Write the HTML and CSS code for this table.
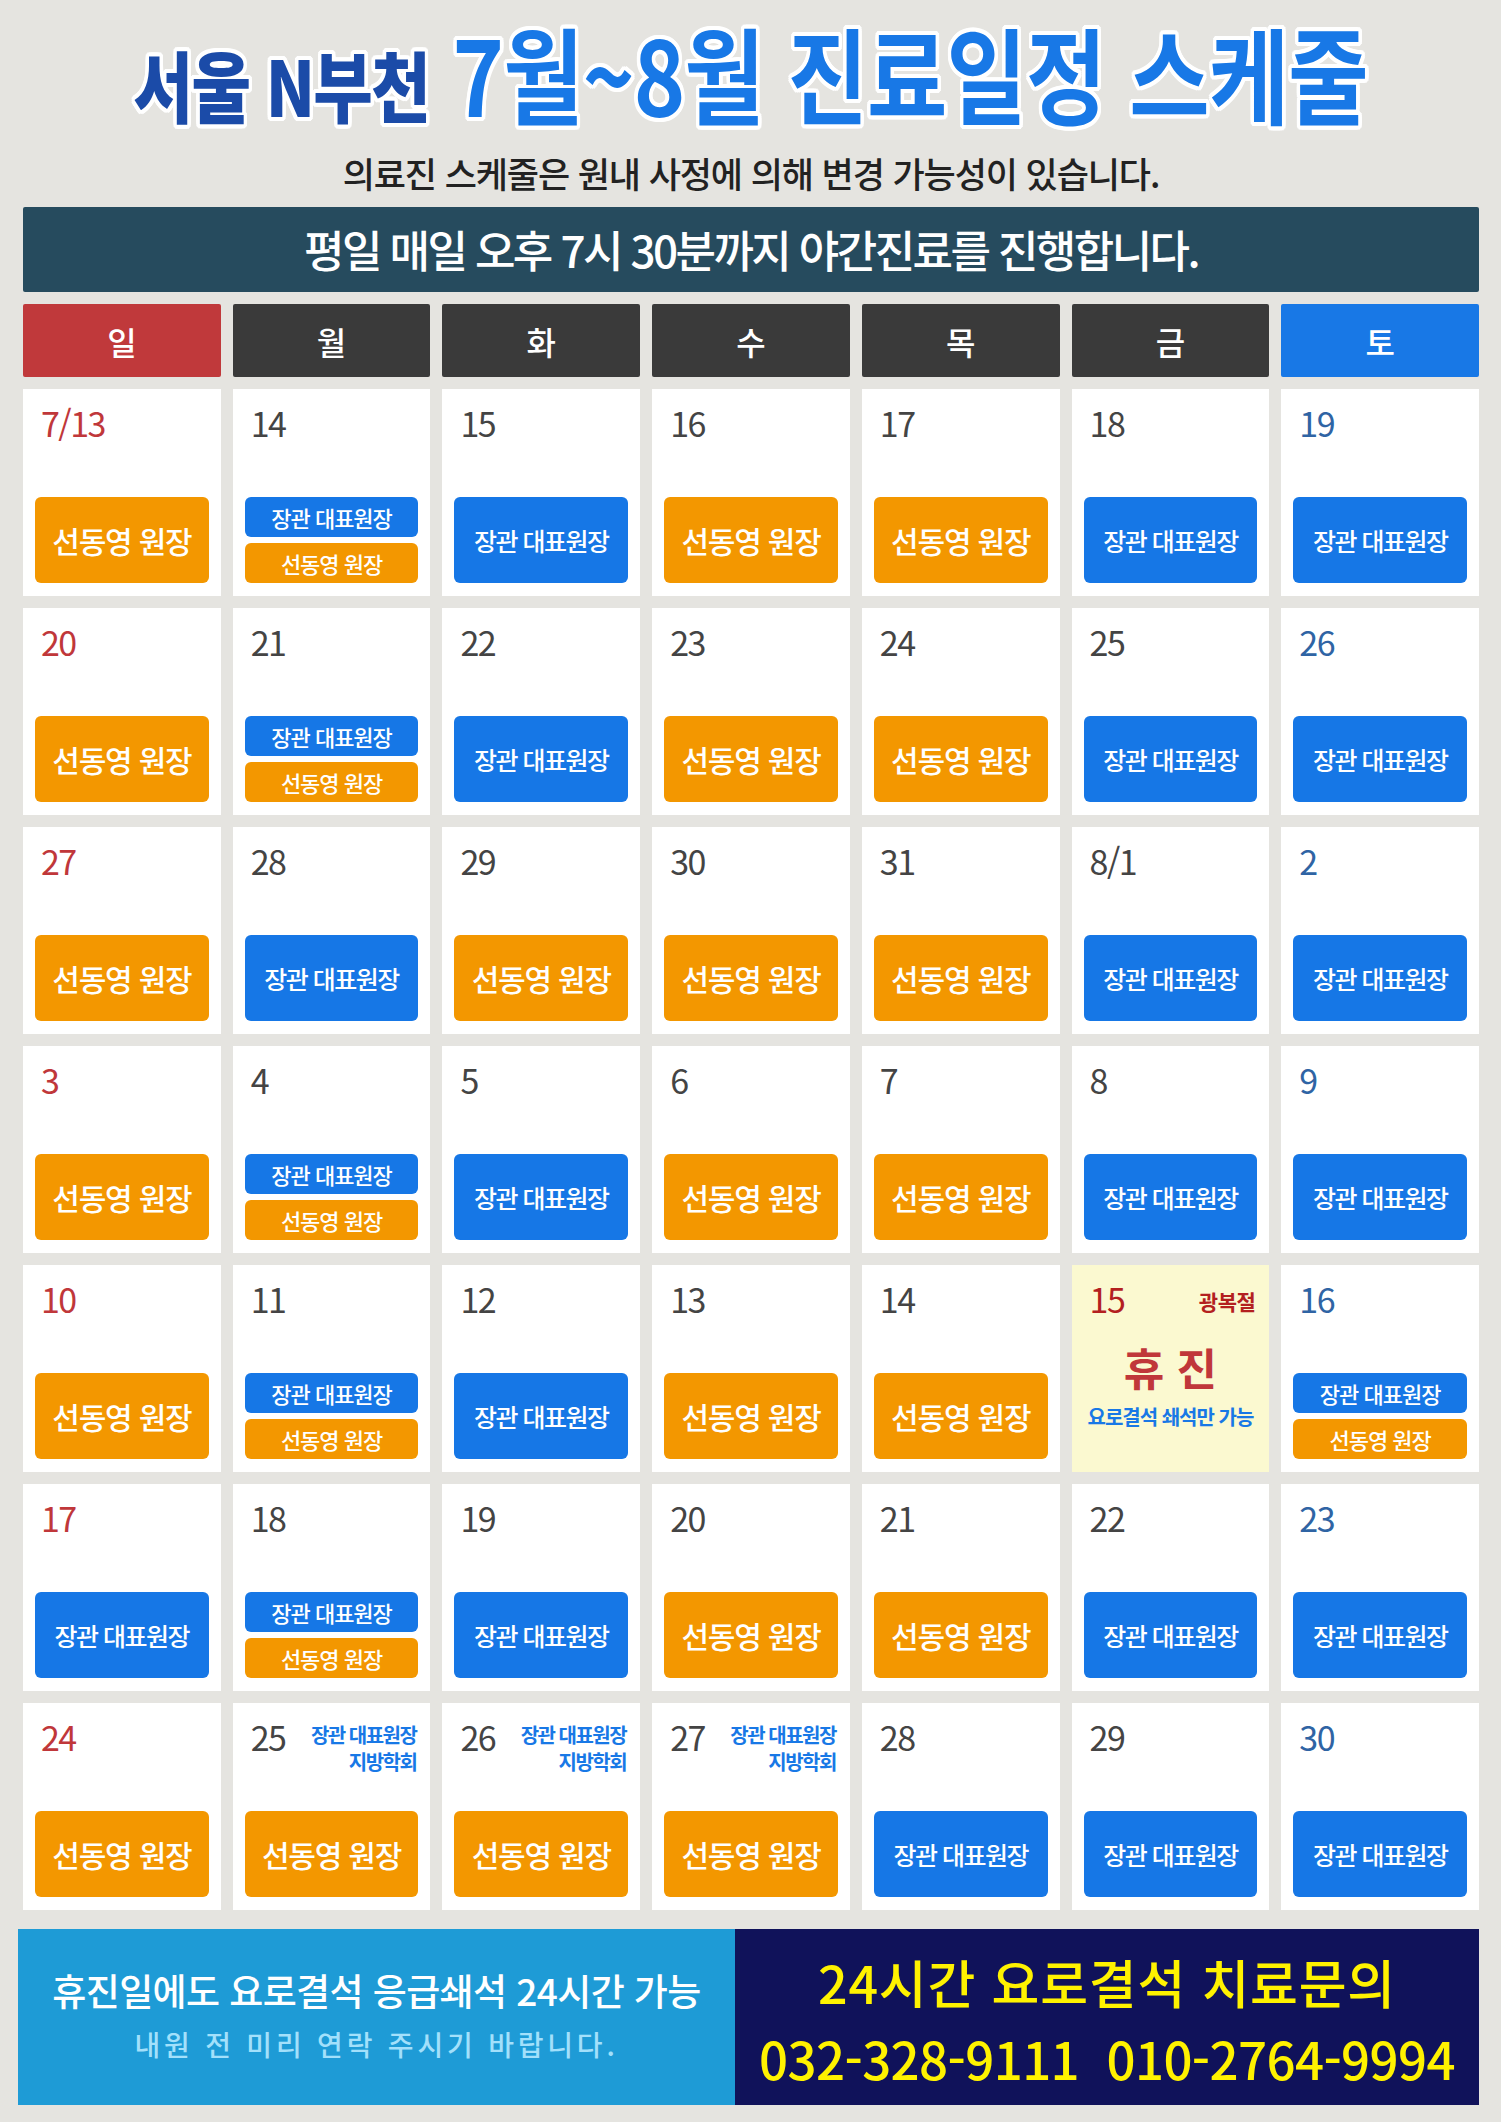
FILE: index.html
```html
<!DOCTYPE html>
<html lang="ko">
<head>
<meta charset="utf-8">
<title>서울 N부천 7월~8월 진료일정 스케줄</title>
<link rel="stylesheet" href="styles.css">
</head>
<body>
<div class="page">
  <h1 class="title"><span class="title-inner"><span class="t1">서울 N부천</span><span class="t2">7월~8월 진료일정 스케줄</span></span></h1>
  <p class="sub">의료진 스케줄은 원내 사정에 의해 변경 가능성이 있습니다.</p>
  <div class="notice">평일 매일 오후 7시 30분까지 야간진료를 진행합니다.</div>

  <div class="cal">
    <div class="dh sun">일</div>
    <div class="dh">월</div>
    <div class="dh">화</div>
    <div class="dh">수</div>
    <div class="dh">목</div>
    <div class="dh">금</div>
    <div class="dh sat">토</div>

    <!-- row 1 -->
    <div class="cell"><div class="top"><span class="num sun">7/13</span></div><div class="slot"><span class="badge lg o">선동영 원장</span></div></div>
    <div class="cell"><div class="top"><span class="num">14</span></div><div class="slot"><span class="badge sm b">장관 대표원장</span><span class="badge sm o">선동영 원장</span></div></div>
    <div class="cell"><div class="top"><span class="num">15</span></div><div class="slot"><span class="badge lg b">장관 대표원장</span></div></div>
    <div class="cell"><div class="top"><span class="num">16</span></div><div class="slot"><span class="badge lg o">선동영 원장</span></div></div>
    <div class="cell"><div class="top"><span class="num">17</span></div><div class="slot"><span class="badge lg o">선동영 원장</span></div></div>
    <div class="cell"><div class="top"><span class="num">18</span></div><div class="slot"><span class="badge lg b">장관 대표원장</span></div></div>
    <div class="cell"><div class="top"><span class="num sat">19</span></div><div class="slot"><span class="badge lg b">장관 대표원장</span></div></div>

    <!-- row 2 -->
    <div class="cell"><div class="top"><span class="num sun">20</span></div><div class="slot"><span class="badge lg o">선동영 원장</span></div></div>
    <div class="cell"><div class="top"><span class="num">21</span></div><div class="slot"><span class="badge sm b">장관 대표원장</span><span class="badge sm o">선동영 원장</span></div></div>
    <div class="cell"><div class="top"><span class="num">22</span></div><div class="slot"><span class="badge lg b">장관 대표원장</span></div></div>
    <div class="cell"><div class="top"><span class="num">23</span></div><div class="slot"><span class="badge lg o">선동영 원장</span></div></div>
    <div class="cell"><div class="top"><span class="num">24</span></div><div class="slot"><span class="badge lg o">선동영 원장</span></div></div>
    <div class="cell"><div class="top"><span class="num">25</span></div><div class="slot"><span class="badge lg b">장관 대표원장</span></div></div>
    <div class="cell"><div class="top"><span class="num sat">26</span></div><div class="slot"><span class="badge lg b">장관 대표원장</span></div></div>

    <!-- row 3 -->
    <div class="cell"><div class="top"><span class="num sun">27</span></div><div class="slot"><span class="badge lg o">선동영 원장</span></div></div>
    <div class="cell"><div class="top"><span class="num">28</span></div><div class="slot"><span class="badge lg b">장관 대표원장</span></div></div>
    <div class="cell"><div class="top"><span class="num">29</span></div><div class="slot"><span class="badge lg o">선동영 원장</span></div></div>
    <div class="cell"><div class="top"><span class="num">30</span></div><div class="slot"><span class="badge lg o">선동영 원장</span></div></div>
    <div class="cell"><div class="top"><span class="num">31</span></div><div class="slot"><span class="badge lg o">선동영 원장</span></div></div>
    <div class="cell"><div class="top"><span class="num">8/1</span></div><div class="slot"><span class="badge lg b">장관 대표원장</span></div></div>
    <div class="cell"><div class="top"><span class="num sat">2</span></div><div class="slot"><span class="badge lg b">장관 대표원장</span></div></div>

    <!-- row 4 -->
    <div class="cell"><div class="top"><span class="num sun">3</span></div><div class="slot"><span class="badge lg o">선동영 원장</span></div></div>
    <div class="cell"><div class="top"><span class="num">4</span></div><div class="slot"><span class="badge sm b">장관 대표원장</span><span class="badge sm o">선동영 원장</span></div></div>
    <div class="cell"><div class="top"><span class="num">5</span></div><div class="slot"><span class="badge lg b">장관 대표원장</span></div></div>
    <div class="cell"><div class="top"><span class="num">6</span></div><div class="slot"><span class="badge lg o">선동영 원장</span></div></div>
    <div class="cell"><div class="top"><span class="num">7</span></div><div class="slot"><span class="badge lg o">선동영 원장</span></div></div>
    <div class="cell"><div class="top"><span class="num">8</span></div><div class="slot"><span class="badge lg b">장관 대표원장</span></div></div>
    <div class="cell"><div class="top"><span class="num sat">9</span></div><div class="slot"><span class="badge lg b">장관 대표원장</span></div></div>

    <!-- row 5 -->
    <div class="cell"><div class="top"><span class="num sun">10</span></div><div class="slot"><span class="badge lg o">선동영 원장</span></div></div>
    <div class="cell"><div class="top"><span class="num">11</span></div><div class="slot"><span class="badge sm b">장관 대표원장</span><span class="badge sm o">선동영 원장</span></div></div>
    <div class="cell"><div class="top"><span class="num">12</span></div><div class="slot"><span class="badge lg b">장관 대표원장</span></div></div>
    <div class="cell"><div class="top"><span class="num">13</span></div><div class="slot"><span class="badge lg o">선동영 원장</span></div></div>
    <div class="cell"><div class="top"><span class="num">14</span></div><div class="slot"><span class="badge lg o">선동영 원장</span></div></div>
    <div class="cell holiday"><div class="top"><span class="num hol">15</span><span class="hol-name">광복절</span></div><div class="closed">휴 진</div><div class="closed-note">요로결석 쇄석만 가능</div></div>
    <div class="cell"><div class="top"><span class="num sat">16</span></div><div class="slot"><span class="badge sm b">장관 대표원장</span><span class="badge sm o">선동영 원장</span></div></div>

    <!-- row 6 -->
    <div class="cell"><div class="top"><span class="num sun">17</span></div><div class="slot"><span class="badge lg b">장관 대표원장</span></div></div>
    <div class="cell"><div class="top"><span class="num">18</span></div><div class="slot"><span class="badge sm b">장관 대표원장</span><span class="badge sm o">선동영 원장</span></div></div>
    <div class="cell"><div class="top"><span class="num">19</span></div><div class="slot"><span class="badge lg b">장관 대표원장</span></div></div>
    <div class="cell"><div class="top"><span class="num">20</span></div><div class="slot"><span class="badge lg o">선동영 원장</span></div></div>
    <div class="cell"><div class="top"><span class="num">21</span></div><div class="slot"><span class="badge lg o">선동영 원장</span></div></div>
    <div class="cell"><div class="top"><span class="num">22</span></div><div class="slot"><span class="badge lg b">장관 대표원장</span></div></div>
    <div class="cell"><div class="top"><span class="num sat">23</span></div><div class="slot"><span class="badge lg b">장관 대표원장</span></div></div>

    <!-- row 7 -->
    <div class="cell"><div class="top"><span class="num sun">24</span></div><div class="slot"><span class="badge lg o">선동영 원장</span></div></div>
    <div class="cell"><div class="top"><span class="num">25</span><span class="note">장관 대표원장<br>지방학회</span></div><div class="slot"><span class="badge lg o">선동영 원장</span></div></div>
    <div class="cell"><div class="top"><span class="num">26</span><span class="note">장관 대표원장<br>지방학회</span></div><div class="slot"><span class="badge lg o">선동영 원장</span></div></div>
    <div class="cell"><div class="top"><span class="num">27</span><span class="note">장관 대표원장<br>지방학회</span></div><div class="slot"><span class="badge lg o">선동영 원장</span></div></div>
    <div class="cell"><div class="top"><span class="num">28</span></div><div class="slot"><span class="badge lg b">장관 대표원장</span></div></div>
    <div class="cell"><div class="top"><span class="num">29</span></div><div class="slot"><span class="badge lg b">장관 대표원장</span></div></div>
    <div class="cell"><div class="top"><span class="num sat">30</span></div><div class="slot"><span class="badge lg b">장관 대표원장</span></div></div>
  </div>

  <div class="footer">
    <div class="foot-left">
      <div class="fl1">휴진일에도 요로결석 응급쇄석 24시간 가능</div>
      <div class="fl2">내원 전 미리 연락 주시기 바랍니다.</div>
    </div>
    <div class="foot-right">
      <div class="fr1">24시간 요로결석 치료문의</div>
      <div class="fr2">032-328-9111&nbsp;&nbsp;010-2764-9994</div>
    </div>
  </div>
</div>
</body>
</html>
```

FILE: styles.css
```css
* { box-sizing: border-box; }
html, body { margin: 0; padding: 0; }
body {
  background: #e5e4e0;
  font-family: "Noto Sans CJK KR", "Noto Sans", sans-serif;
  color: #444;
}
.page {
  width: 1501px;
  padding: 0 22px 17px 23px;
}

/* title */
.title {
  margin: 0;
  height: 150px;
  padding-top: 0;
  padding-bottom: 6px;
  display: flex;
  align-items: center;
  justify-content: center;
  white-space: nowrap;
  line-height: 1;
}
.title-inner {
  display: inline-block;
  transform: scaleX(0.84);
  transform-origin: center;
}
.t1, .t2 {
  text-shadow:
    4px 0 0 #fff, -4px 0 0 #fff, 0 4px 0 #fff, 0 -4px 0 #fff,
    3px 3px 0 #fff, -3px 3px 0 #fff, 3px -3px 0 #fff, -3px -3px 0 #fff,
    4px 2px 0 #fff, -4px 2px 0 #fff, 4px -2px 0 #fff, -4px -2px 0 #fff,
    2px 4px 0 #fff, -2px 4px 0 #fff, 2px -4px 0 #fff, -2px -4px 0 #fff;
}
.t1 {
  font-size: 77px;
  font-weight: 900;
  color: #1b4ba8;
  letter-spacing: -2px;
  margin-right: 28px;
}
.t2 {
  font-size: 104px;
  font-weight: 700;
  color: #1878e6;
  letter-spacing: -1px;
}

.sub {
  margin: 0;
  height: 45px;
  line-height: 45px;
  text-align: center;
  font-size: 35px;
  font-weight: 500;
  color: #222;
  letter-spacing: -1.1px;
}

.notice {
  margin-top: 12px;
  height: 85px;
  line-height: 85px;
  background: #264b5e;
  color: #fff;
  text-align: center;
  font-size: 44px;
  font-weight: 500;
  letter-spacing: -2.6px;
  border-radius: 2px;
}

/* calendar */
.cal {
  margin-top: 12px;
  display: grid;
  grid-template-columns: repeat(7, 1fr);
  grid-template-rows: 73px;
  grid-auto-rows: 207px;
  gap: 12px;
}
.dh {
  background: #3a3a3a;
  color: #fff;
  font-size: 32px;
  font-weight: 500;
  display: flex;
  align-items: center;
  justify-content: center;
  border-radius: 2px;
}
.dh.sun { background: #c0393b; }
.dh.sat { background: #1878e6; }

.cell {
  background: #fff;
  display: flex;
  flex-direction: column;
  padding: 14px 12px 13px;
}
.top {
  display: flex;
  justify-content: space-between;
  align-items: flex-start;
}
.num {
  padding-left: 6px;
  font-size: 34px;
  line-height: 40px;
  letter-spacing: -1.5px;
  color: #444;
}
.num.sun { color: #c0373a; }
.num.sat { color: #2f64a4; }
.num.hol { color: #b3201f; }

.note {
  padding-top: 4px;
  padding-right: 2px;
  text-align: right;
  font-size: 20px;
  line-height: 27px;
  font-weight: 700;
  color: #1878e6;
  letter-spacing: -1.5px;
}

.slot {
  margin-top: auto;
  height: 86px;
  display: flex;
  flex-direction: column;
  gap: 6px;
}
.badge {
  display: flex;
  align-items: center;
  justify-content: center;
  color: #fff;
  border-radius: 6px;
  white-space: nowrap;
  font-weight: 500;
}
.badge.o { background: #f39700; }
.badge.b { background: #1677e6; }
.badge.lg { flex: 1; font-size: 30px; letter-spacing: -1.2px; }
.badge.lg.b { font-size: 25px; letter-spacing: -1.5px; }
.badge.sm { height: 40px; font-size: 22px; letter-spacing: -1px; }

.holiday { background: #fbf9d0; }
.hol-name {
  padding-top: 7px;
  padding-right: 2px;
  font-size: 21px;
  font-weight: 700;
  color: #b3201f;
  letter-spacing: -0.5px;
}
.closed {
  margin-top: 22px;
  text-align: center;
  font-size: 44px;
  line-height: 52px;
  font-weight: 700;
  color: #c0373a;
  letter-spacing: 0;
}
.closed-note {
  margin-top: 9px;
  text-align: center;
  font-size: 20px;
  font-weight: 700;
  color: #1878e6;
  letter-spacing: -1px;
  white-space: nowrap;
}

/* footer */
.footer {
  margin-top: 19px;
  margin-left: -5px;
  height: 176px;
  display: flex;
}
.foot-left {
  width: 717px;
  background: #1e9bd6;
  display: flex;
  flex-direction: column;
  align-items: center;
  justify-content: center;
}
.fl1 {
  font-size: 37px;
  line-height: 54px;
  font-weight: 500;
  color: #fff;
  letter-spacing: -0.6px;
}
.fl2 {
  font-size: 28px;
  line-height: 54px;
  font-weight: 500;
  color: #a3e0fb;
  letter-spacing: 3.8px;
}
.foot-right {
  flex: 1;
  background: #10125a;
  display: flex;
  flex-direction: column;
  align-items: center;
  justify-content: center;
  padding-top: 6px;
  color: #fff200;
  font-weight: 500;
}
.fr1 {
  font-size: 52px;
  line-height: 76px;
  letter-spacing: 0.8px;
}
.fr2 {
  font-size: 51px;
  line-height: 76px;
  letter-spacing: -0.6px;
  white-space: nowrap;
}
```
